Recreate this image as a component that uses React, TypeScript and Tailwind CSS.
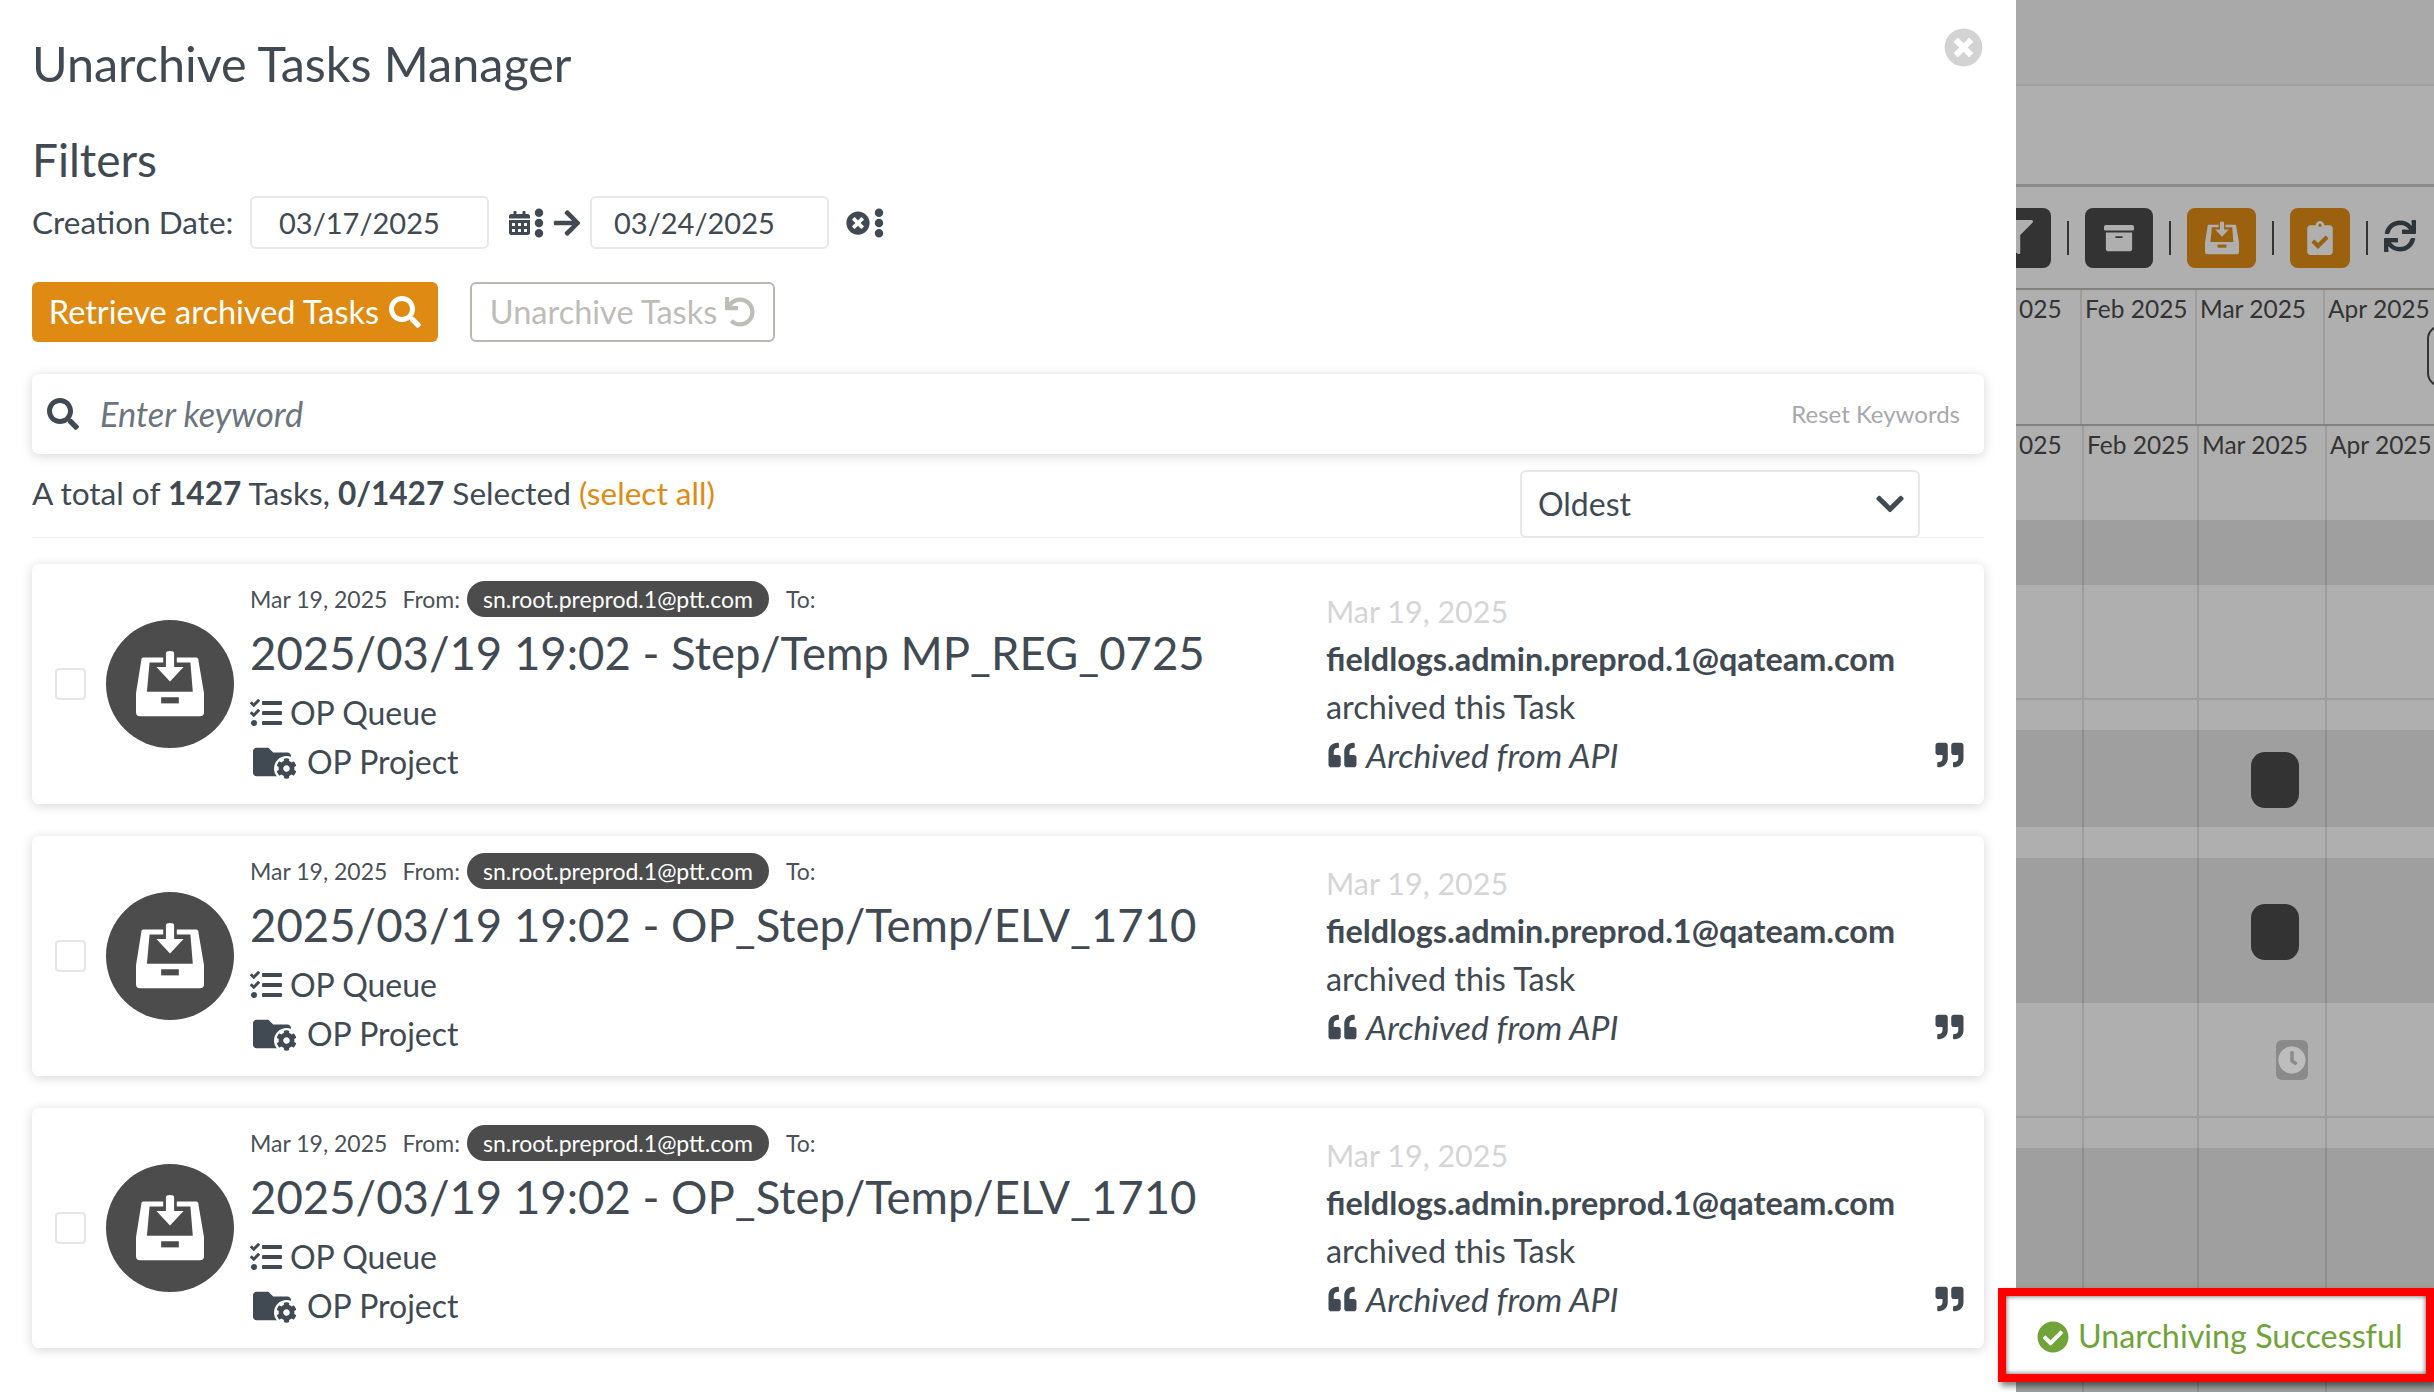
import type { ReactNode } from "react";
import {
  FaArchive,
  FaArrowRight,
  FaCalendarAlt,
  FaCheckCircle,
  FaChevronDown,
  FaClipboardCheck,
  FaClock,
  FaCog,
  FaEllipsisV,
  FaFilter,
  FaFolder,
  FaQuoteLeft,
  FaQuoteRight,
  FaSearch,
  FaSync,
  FaTasks,
  FaTimesCircle,
  FaUndo,
} from "react-icons/fa";

type Task = { title: string };

const tasks: Task[] = [
  { title: "2025/03/19 19:02 - Step/Temp MP_REG_0725" },
  { title: "2025/03/19 19:02 - OP_Step/Temp/ELV_1710" },
  { title: "2025/03/19 19:02 - OP_Step/Temp/ELV_1710" },
];

// tray with a down arrow, the hole colour is passed in so it fits any background
const InboxIcon = ({ className, holeClass, fillClass }: { className: string; holeClass: string; fillClass: string }) => (
  <svg viewBox="135 135 210 200" className={className}>
    <path
      className={fillClass}
      d="M160 157H318Q322 157 323 162L340 262V318Q340 330 328 330H152Q140 330 140 318V262L156 162Q157 157 160 157Z"
    />
    <path className={holeClass} d="M180 172H300L307 258H172Z" />
    <path className={holeClass} d="M214 274H266V292H214Z" />
    <path className={holeClass} d="M220 150H260V178H290L240 238L190 178H220Z" />
    <path className={fillClass} d="M228 144Q228 138 240 138Q252 138 252 144V185H280L240 228L200 185H228Z" />
  </svg>
);

const TaskCard = ({ task }: { task: Task }) => (
  <div className="flex h-[240px] items-start rounded-[7px] bg-white shadow-[0_2px_12px_rgba(0,0,0,0.16)]">
    <div className="ml-[23px] mt-[104px] h-[32px] w-[31px] rounded-[4px] border-2 border-[#e6e6e6] bg-white" />
    <div className="ml-[20px] mt-[56px] flex h-[128px] w-[128px] items-center justify-center rounded-full bg-[#4c4c4c]">
      <InboxIcon className="h-[68px] w-[72px]" holeClass="fill-[#4c4c4c]" fillClass="fill-white" />
    </div>
    <div className="ml-[16px] w-[1076px] pt-[17px]">
      <div className="flex h-[36px] items-center text-[23px] text-[#4a5158]">
        <span>Mar 19, 2025</span>
        <span className="ml-[15px]">From:</span>
        <span className="ml-[7px] flex h-[36px] w-[302px] items-center justify-center rounded-full bg-[#4c4c4c] text-white">
          sn.root.preprod.1@ptt.com
        </span>
        <span className="ml-[17px]">To:</span>
      </div>
      <div className="mt-[6px] text-[45.5px] leading-[60px] text-[#414a52]">{task.title}</div>
      <div className="mt-[10px] flex h-[40px] items-center text-[32px] text-[#414a52]">
        <FaTasks className="mr-[8px] h-[32px] w-[32px]" />
        <span>OP Queue</span>
      </div>
      <div className="mt-[5px] flex h-[48px] items-center text-[32px] text-[#414a52]">
        <span className="relative mr-[8px] h-[38px] w-[49px]">
          <FaFolder className="h-[38px] w-[44px]" />
          <FaCog className="absolute bottom-[0px] right-[0px] h-[25px] w-[25px] rounded-full bg-white p-[2px]" />
        </span>
        <span>OP Project</span>
      </div>
    </div>
    <div className="flex-1 pr-[18px] pt-[23px] text-[32.4px] leading-[48px] text-[#414a52]">
      <div className="text-[30.5px] text-[#d5d5d5]">Mar 19, 2025</div>
      <div className="font-bold">fieldlogs.admin.preprod.1@qateam.com</div>
      <div>archived this Task</div>
      <div className="flex items-center">
        <FaQuoteLeft className="mr-[7px] h-[28px] w-[33px]" />
        <span className="text-[33.7px] italic">Archived from API</span>
        <FaQuoteRight className="ml-auto h-[28px] w-[33px]" />
      </div>
    </div>
  </div>
);

const Modal = () => (
  <div className="h-[1392px] w-[2016px] shrink-0 rounded-tr-[8px] bg-white px-[32px] text-[#414a52]">
    <div className="relative pt-[39px]">
      <h1 className="text-[48.5px] leading-[48px]">Unarchive Tasks Manager</h1>
      <FaTimesCircle className="absolute right-[1px] top-[28px] h-[39px] w-[39px] text-[#d3d3d3]" />
    </div>
    <h2 className="mt-[49px] text-[46px] leading-[48px]">Filters</h2>

    <div className="mt-[12px] flex h-[53px] items-center text-[29px]">
      <span className="w-[218px] text-[31.5px]">Creation Date:</span>
      <div className="flex h-[53px] w-[239px] items-center rounded-[6px] border-2 border-[#e8e8e8] pl-[27px]">03/17/2025</div>
      <FaCalendarAlt className="ml-[20px] h-[24px] w-[21px]" />
      <FaEllipsisV className="ml-[3px] h-[30px] w-[12px]" />
      <FaArrowRight className="ml-[7px] h-[30px] w-[30px]" />
      <div className="ml-[8px] flex h-[53px] w-[239px] items-center rounded-[6px] border-2 border-[#e8e8e8] pl-[22px]">03/24/2025</div>
      <FaTimesCircle className="ml-[17px] h-[24px] w-[24px]" />
      <FaEllipsisV className="ml-[3px] h-[30px] w-[12px]" />
    </div>

    <div className="mt-[33px] flex h-[60px] gap-[32px] text-[32.5px]">
      <button className="flex w-[406px] items-center justify-center gap-[10px] rounded-[6px] bg-[#df8a13] text-white">
        Retrieve archived Tasks
        <FaSearch className="h-[32px] w-[32px]" />
      </button>
      <button className="flex w-[305px] items-center justify-center gap-[8px] rounded-[6px] border-2 border-[#b9b8b3] text-[#bdbcb7]">
        Unarchive Tasks
        <FaUndo className="h-[30px] w-[30px]" />
      </button>
    </div>

    <div className="mt-[32px] flex h-[80px] items-center rounded-[7px] bg-white pl-[15px] pr-[24px] shadow-[0_2px_12px_rgba(0,0,0,0.16)]">
      <FaSearch className="h-[32px] w-[32px]" />
      <span className="ml-[21px] text-[34.4px] italic text-[#6c757d]">Enter keyword</span>
      <span className="ml-auto text-[24px] text-[#a6a9ac]">Reset Keywords</span>
    </div>

    <div className="mt-[16px] flex h-[68px] items-start justify-between border-b border-[#f0f0f0] pr-[64px]">
      <div className="text-[31.6px] leading-[46px]">
        A total of <b>1427</b> Tasks, <b>0/1427</b> Selected <span className="text-[#e08a13]">(select all)</span>
      </div>
      <div className="flex h-[68px] w-[400px] items-center justify-between rounded-[6px] border-2 border-[#e8e8e8] pl-[16px] pr-[12px] text-[32px]">
        Oldest
        <FaChevronDown className="h-[32px] w-[32px]" />
      </div>
    </div>

    <div className="mt-[26px] flex flex-col gap-[32px]">
      {tasks.map((task, i) => (
        <TaskCard key={i} task={task} />
      ))}
    </div>
  </div>
);

const Separator = () => <div className="h-[34px] w-[2px] bg-[#333]" />;

const GridRow = ({ className, cells }: { className: string; cells?: ReactNode[] }) => (
  <div className={`flex ${className}`}>
    <div className="flex w-[68px] shrink-0 border-r-2 border-black/10">{cells?.[0]}</div>
    <div className="flex w-[115px] shrink-0 border-r-2 border-black/10">{cells?.[1]}</div>
    <div className="flex w-[128px] shrink-0 border-r-2 border-black/10">{cells?.[2]}</div>
    <div className="flex flex-1">{cells?.[3]}</div>
  </div>
);

const Month = ({ label, className }: { label: string; className: string }) => (
  <span className={`block whitespace-nowrap pl-[3px] text-[24.5px] leading-[32px] text-[#333] ${className}`}>{label}</span>
);

const Backdrop = () => (
  <div className="flex h-[1392px] flex-1 flex-col bg-[#afafaf]">
    <div className="h-[86px] border-b-2 border-[#a0a0a0] bg-[#a9a9a9]" />
    <div className="h-[101px] border-b-[3px] border-[#8a8a8a]" />
    <div className="flex h-[103px] items-start border-b-2 border-[#85807c] pt-[21px]">
      <div className="flex h-[60px] w-[35px] items-start justify-end overflow-hidden rounded-r-[8px] bg-[#333] pr-[18px] pt-[12px]">
        <FaFilter className="h-[34px] w-[34px] shrink-0 text-[#afafaf]" />
      </div>
      <div className="ml-[16px] mt-[13px]"><Separator /></div>
      <div className="ml-[16px] flex h-[60px] w-[68px] items-center justify-center rounded-[8px] bg-[#333]">
        <FaArchive className="h-[30px] w-[34px] text-[#afafaf]" />
      </div>
      <div className="ml-[16px] mt-[13px]"><Separator /></div>
      <div className="ml-[16px] flex h-[60px] w-[69px] items-center justify-center rounded-[8px] bg-[#9c610f]">
        <InboxIcon className="h-[34px] w-[36px]" holeClass="fill-[#9c610f]" fillClass="fill-[#afafaf]" />
      </div>
      <div className="ml-[16px] mt-[13px]"><Separator /></div>
      <div className="ml-[16px] flex h-[60px] w-[60px] items-center justify-center rounded-[8px] bg-[#9c610f]">
        <FaClipboardCheck className="h-[34px] w-[26px] text-[#afafaf]" />
      </div>
      <div className="ml-[16px] mt-[13px]"><Separator /></div>
      <FaSync className="ml-[16px] mt-[12px] h-[32px] w-[32px] text-[#2d343a]" />
    </div>
    <div className="relative h-[136px] overflow-hidden border-b-2 border-[#85807c]">
      <div className="flex h-[134px] [&>div]:border-r-2 [&>div]:border-black/10">
        <div className="w-[66px] shrink-0 overflow-hidden"><Month label="025" className="mt-[3px]" /></div>
        <div className="w-[115px] shrink-0"><Month label="Feb 2025" className="mt-[3px]" /></div>
        <div className="w-[128px] shrink-0"><Month label="Mar 2025" className="mt-[3px]" /></div>
        <div className="flex-1 !border-r-0"><Month label="Apr 2025" className="mt-[3px]" /></div>
      </div>
      <div className="absolute left-[411px] top-[35px] h-[62px] w-[30px] rounded-l-[14px] border-2 border-[#333]" />
    </div>
    <GridRow
      className="h-[94px]"
      cells={[
        <Month label="025" className="mt-[3px]" />,
        <Month label="Feb 2025" className="mt-[3px]" />,
        <Month label="Mar 2025" className="mt-[3px]" />,
        <Month label="Apr 2025" className="mt-[3px]" />,
      ]}
    />
    <GridRow className="h-[65px] bg-[#9f9f9f]" />
    <GridRow className="h-[115px] border-b-2 border-black/10" />
    <GridRow className="h-[30px]" />
    <GridRow
      className="h-[97px] bg-[#9f9f9f]"
      cells={[null, null, <div className="ml-[52px] mt-[22px] h-[56px] w-[48px] rounded-[14px] bg-[#333]" />]}
    />
    <GridRow className="h-[31px]" />
    <GridRow
      className="h-[145px] bg-[#9f9f9f]"
      cells={[null, null, <div className="ml-[52px] mt-[46px] h-[56px] w-[48px] rounded-[14px] bg-[#333]" />]}
    />
    <GridRow
      className="h-[115px] border-b-2 border-black/10"
      cells={[
        null,
        null,
        <div className="ml-[77px] mt-[37px] flex h-[40px] w-[32px] items-center justify-center rounded-[6px] bg-[#8a8a8a]">
          <FaClock className="h-[28px] w-[30px] text-[#bdbdbd]" />
        </div>,
      ]}
    />
    <GridRow className="h-[30px]" />
    <GridRow className="flex-1 bg-[#9f9f9f]" />
  </div>
);

export default function App() {
  return (
    <div className="relative flex h-[1392px] w-[2434px] overflow-hidden bg-white font-[Lato,sans-serif]">
      <Modal />
      <Backdrop />
      <div className="absolute left-[1998px] top-[1288px] flex h-[94px] w-[436px] items-center border-[8px] border-[#ff0000] bg-white pl-[31px] pt-[3px] text-[32.3px] text-[#70a338] shadow-[inset_0_0_5px_#555,3px_4px_6px_rgba(0,0,0,0.5)]">
        <FaCheckCircle className="mr-[9px] h-[32px] w-[32px]" />
        Unarchiving Successful
      </div>
    </div>
  );
}
